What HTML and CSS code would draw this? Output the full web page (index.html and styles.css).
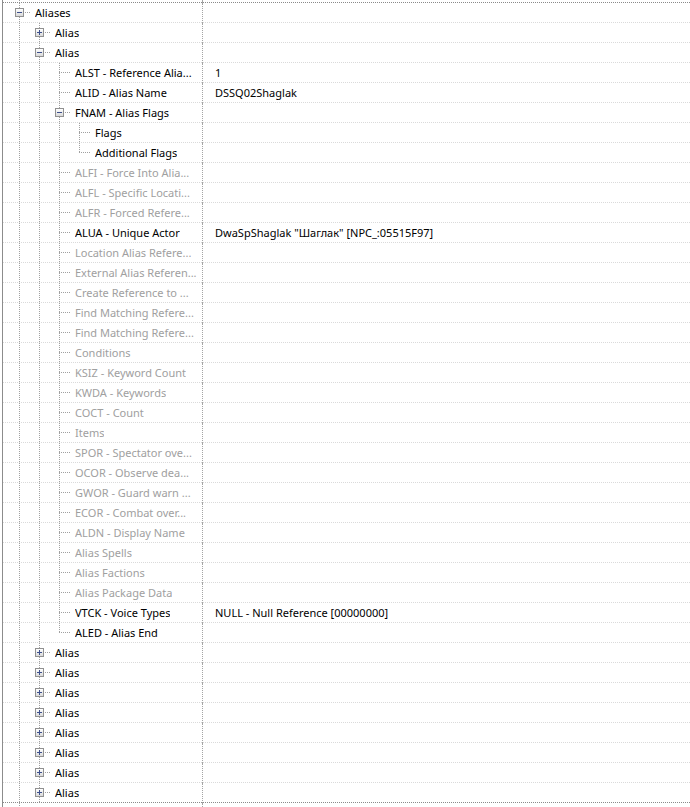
FILE: index.html
```html
<!DOCTYPE html>
<html>
<head>
<meta charset="utf-8">
<link rel="stylesheet" href="styles.css">
</head>
<body>
<div class="frame">
  <div class="stub"><div class="c1"><span class="g v"></span></div><div class="c2"></div></div>
  <div class="topline"></div>

  <div class="row"><div class="c1"><span class="n tee"><i class="box minus"></i></span><span class="t">Aliases</span></div><div class="c2"></div></div>
  <div class="row"><div class="c1"><span class="g v"></span><span class="n tee"><i class="box plus"></i></span><span class="t">Alias</span></div><div class="c2"></div></div>
  <div class="row"><div class="c1"><span class="g v"></span><span class="n tee"><i class="box minus"></i></span><span class="t">Alias</span></div><div class="c2"></div></div>

  <div class="row"><div class="c1"><span class="g v"></span><span class="g v"></span><span class="n tee"></span><span class="t">ALST - Reference Alia...</span></div><div class="c2">1</div></div>
  <div class="row"><div class="c1"><span class="g v"></span><span class="g v"></span><span class="n tee"></span><span class="t">ALID - Alias Name</span></div><div class="c2">DSSQ02Shaglak</div></div>
  <div class="row"><div class="c1"><span class="g v"></span><span class="g v"></span><span class="n tee"><i class="box minus"></i></span><span class="t">FNAM - Alias Flags</span></div><div class="c2"></div></div>
  <div class="row"><div class="c1"><span class="g v"></span><span class="g v"></span><span class="g v"></span><span class="n tee"></span><span class="t">Flags</span></div><div class="c2"></div></div>
  <div class="row"><div class="c1"><span class="g v"></span><span class="g v"></span><span class="g v"></span><span class="n end"></span><span class="t">Additional Flags</span></div><div class="c2"></div></div>
  <div class="row"><div class="c1"><span class="g v"></span><span class="g v"></span><span class="n tee"></span><span class="t dim">ALFI - Force Into Alia...</span></div><div class="c2"></div></div>
  <div class="row"><div class="c1"><span class="g v"></span><span class="g v"></span><span class="n tee"></span><span class="t dim">ALFL - Specific Locati...</span></div><div class="c2"></div></div>
  <div class="row"><div class="c1"><span class="g v"></span><span class="g v"></span><span class="n tee"></span><span class="t dim">ALFR - Forced Refere...</span></div><div class="c2"></div></div>
  <div class="row"><div class="c1"><span class="g v"></span><span class="g v"></span><span class="n tee"></span><span class="t">ALUA - Unique Actor</span></div><div class="c2">DwaSpShaglak "Шаглак" [NPC_:05515F97]</div></div>
  <div class="row"><div class="c1"><span class="g v"></span><span class="g v"></span><span class="n tee"></span><span class="t dim">Location Alias Refere...</span></div><div class="c2"></div></div>
  <div class="row"><div class="c1"><span class="g v"></span><span class="g v"></span><span class="n tee"></span><span class="t dim">External Alias Referen...</span></div><div class="c2"></div></div>
  <div class="row"><div class="c1"><span class="g v"></span><span class="g v"></span><span class="n tee"></span><span class="t dim">Create Reference to ...</span></div><div class="c2"></div></div>
  <div class="row"><div class="c1"><span class="g v"></span><span class="g v"></span><span class="n tee"></span><span class="t dim">Find Matching Refere...</span></div><div class="c2"></div></div>
  <div class="row"><div class="c1"><span class="g v"></span><span class="g v"></span><span class="n tee"></span><span class="t dim">Find Matching Refere...</span></div><div class="c2"></div></div>
  <div class="row"><div class="c1"><span class="g v"></span><span class="g v"></span><span class="n tee"></span><span class="t dim">Conditions</span></div><div class="c2"></div></div>
  <div class="row"><div class="c1"><span class="g v"></span><span class="g v"></span><span class="n tee"></span><span class="t dim">KSIZ - Keyword Count</span></div><div class="c2"></div></div>
  <div class="row"><div class="c1"><span class="g v"></span><span class="g v"></span><span class="n tee"></span><span class="t dim">KWDA - Keywords</span></div><div class="c2"></div></div>
  <div class="row"><div class="c1"><span class="g v"></span><span class="g v"></span><span class="n tee"></span><span class="t dim">COCT - Count</span></div><div class="c2"></div></div>
  <div class="row"><div class="c1"><span class="g v"></span><span class="g v"></span><span class="n tee"></span><span class="t dim">Items</span></div><div class="c2"></div></div>
  <div class="row"><div class="c1"><span class="g v"></span><span class="g v"></span><span class="n tee"></span><span class="t dim">SPOR - Spectator ove...</span></div><div class="c2"></div></div>
  <div class="row"><div class="c1"><span class="g v"></span><span class="g v"></span><span class="n tee"></span><span class="t dim">OCOR - Observe dea...</span></div><div class="c2"></div></div>
  <div class="row"><div class="c1"><span class="g v"></span><span class="g v"></span><span class="n tee"></span><span class="t dim">GWOR - Guard warn ...</span></div><div class="c2"></div></div>
  <div class="row"><div class="c1"><span class="g v"></span><span class="g v"></span><span class="n tee"></span><span class="t dim">ECOR - Combat over...</span></div><div class="c2"></div></div>
  <div class="row"><div class="c1"><span class="g v"></span><span class="g v"></span><span class="n tee"></span><span class="t dim">ALDN - Display Name</span></div><div class="c2"></div></div>
  <div class="row"><div class="c1"><span class="g v"></span><span class="g v"></span><span class="n tee"></span><span class="t dim">Alias Spells</span></div><div class="c2"></div></div>
  <div class="row"><div class="c1"><span class="g v"></span><span class="g v"></span><span class="n tee"></span><span class="t dim">Alias Factions</span></div><div class="c2"></div></div>
  <div class="row"><div class="c1"><span class="g v"></span><span class="g v"></span><span class="n tee"></span><span class="t dim">Alias Package Data</span></div><div class="c2"></div></div>
  <div class="row"><div class="c1"><span class="g v"></span><span class="g v"></span><span class="n tee"></span><span class="t">VTCK - Voice Types</span></div><div class="c2">NULL - Null Reference [00000000]</div></div>
  <div class="row"><div class="c1"><span class="g v"></span><span class="g v"></span><span class="n end"></span><span class="t">ALED - Alias End</span></div><div class="c2"></div></div>

  <div class="row"><div class="c1"><span class="g v"></span><span class="n tee"><i class="box plus"></i></span><span class="t">Alias</span></div><div class="c2"></div></div>
  <div class="row"><div class="c1"><span class="g v"></span><span class="n tee"><i class="box plus"></i></span><span class="t">Alias</span></div><div class="c2"></div></div>
  <div class="row"><div class="c1"><span class="g v"></span><span class="n tee"><i class="box plus"></i></span><span class="t">Alias</span></div><div class="c2"></div></div>
  <div class="row"><div class="c1"><span class="g v"></span><span class="n tee"><i class="box plus"></i></span><span class="t">Alias</span></div><div class="c2"></div></div>
  <div class="row"><div class="c1"><span class="g v"></span><span class="n tee"><i class="box plus"></i></span><span class="t">Alias</span></div><div class="c2"></div></div>
  <div class="row"><div class="c1"><span class="g v"></span><span class="n tee"><i class="box plus"></i></span><span class="t">Alias</span></div><div class="c2"></div></div>
  <div class="row"><div class="c1"><span class="g v"></span><span class="n tee"><i class="box plus"></i></span><span class="t">Alias</span></div><div class="c2"></div></div>
  <div class="row last"><div class="c1"><span class="g v"></span><span class="n tee"><i class="box plus"></i></span><span class="t">Alias</span></div><div class="c2"></div></div>

  <div class="stub bottom"><div class="c1"><span class="g v"></span></div><div class="c2"></div></div>
</div>
</body>
</html>
```

FILE: styles.css
```css
html, body {
  margin: 0;
  padding: 0;
  background: #ffffff;
}

body {
  font-family: "Noto Sans", "Open Sans", "DejaVu Sans", sans-serif;
  font-size: 11px;
  color: #000000;
}

.frame {
  margin-left: 2px;
  border-left: 1px solid #8c8c8c;
  height: 807px;
  overflow: hidden;
}

.stub {
  display: flex;
  height: 2px;
}

.stub.bottom {
  height: 6px;
}

.stub .c1 {
  height: 100%;
}

.stub .g.v {
  height: 100%;
}

.topline {
  height: 1px;
  background: repeating-linear-gradient(to right, #8a8a8a 0 1px, transparent 1px 2px);
}

.row {
  display: flex;
  height: 20px;
  background: repeating-linear-gradient(to right, #dadada 0 1px, transparent 1px 2px) left bottom / 100% 1px no-repeat;
}

.row.last {
  background: repeating-linear-gradient(to right, #8a8a8a 0 1px, transparent 1px 2px) left bottom / 100% 1px no-repeat;
}

.c1 {
  display: flex;
  align-items: stretch;
  width: 193px;
  padding-left: 6px;
  border-right: 1px dotted #a4a4a4;
  overflow: hidden;
  white-space: nowrap;
  flex: none;
}

.c2 {
  flex: 1;
  padding-left: 12px;
  line-height: 19px;
  white-space: nowrap;
}

.g {
  width: 20px;
  flex: none;
}

.g.v {
  background: repeating-linear-gradient(#a0a0a0 0 1px, transparent 1px 2px) 10px 0 / 1px 100% no-repeat;
}

.n {
  width: 22px;
  flex: none;
  display: flex;
  align-items: flex-start;
}

.n.tee {
  background:
    repeating-linear-gradient(to right, #a0a0a0 0 1px, transparent 1px 2px) 10px 9px / 12px 1px no-repeat,
    repeating-linear-gradient(#a0a0a0 0 1px, transparent 1px 2px) 10px 0 / 1px 100% no-repeat;
}

.n.end {
  background:
    repeating-linear-gradient(to right, #a0a0a0 0 1px, transparent 1px 2px) 10px 9px / 12px 1px no-repeat,
    repeating-linear-gradient(#a0a0a0 0 1px, transparent 1px 2px) 10px 0 / 1px 10px no-repeat;
}

.box {
  display: block;
  box-sizing: border-box;
  width: 9px;
  height: 9px;
  margin: 5px 0 0 6px;
  border: 1px solid #919191;
  background-color: #f4f4f4;
}

.box.minus {
  background:
    linear-gradient(#3c4f8c, #3c4f8c) 1px 3px / 5px 1px no-repeat,
    linear-gradient(#ffffff, #d8d8d8);
}

.box.plus {
  background:
    linear-gradient(#3c4f8c, #3c4f8c) 1px 3px / 5px 1px no-repeat,
    linear-gradient(#3c4f8c, #3c4f8c) 3px 1px / 1px 5px no-repeat,
    linear-gradient(#ffffff, #d8d8d8);
}

.t {
  margin-left: 4px;
  line-height: 19px;
  overflow: hidden;
}

.t.dim {
  color: #a0a0a0;
}
```
